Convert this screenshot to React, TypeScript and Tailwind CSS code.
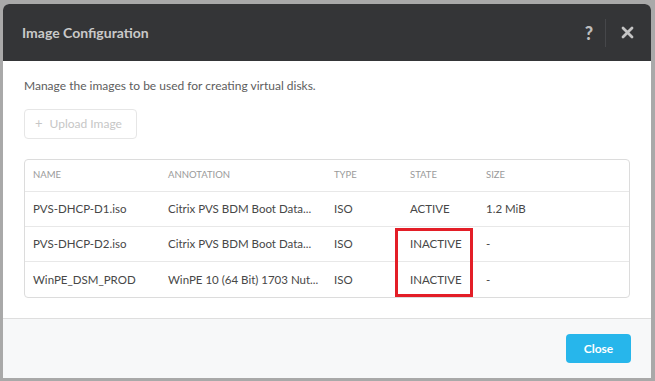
const rows = [
  { name: 'PVS-DHCP-D1.iso', annotation: 'Citrix PVS BDM Boot Data...', type: 'ISO', state: 'ACTIVE', size: '1.2 MiB' },
  { name: 'PVS-DHCP-D2.iso', annotation: 'Citrix PVS BDM Boot Data...', type: 'ISO', state: 'INACTIVE', size: '-' },
  { name: 'WinPE_DSM_PROD', annotation: 'WinPE 10 (64 Bit) 1703 Nut...', type: 'ISO', state: 'INACTIVE', size: '-' },
]

const cols = ['w-[135px]', 'w-[166px]', 'w-[76px]', 'w-[76px]', 'flex-1']

export default function App() {
  return (
    <div className="h-[381px] w-[655px] bg-[#a9a9a9] pt-[4px] pl-[3px] font-['Lato',sans-serif]">
      <div className="flex h-[374px] w-[648px] flex-col overflow-hidden rounded-t-[6px] bg-white">
        {/* header */}
        <div className="flex h-[57px] items-center bg-[#343537] pl-[19px] pr-[17px]">
          <h1 className="flex-1 text-[14px] font-bold text-[#c9c9c9]">Image Configuration</h1>
          <span className="text-[18px] font-black leading-none text-[#bdbdbd]">?</span>
          <div className="mr-[13px] ml-[12px] h-[28px] w-px bg-[#46474a]" />
          <svg width="13" height="13" viewBox="0 0 13 13" className="ml-[2px]">
            <path d="M2 2 L11 11 M11 2 L2 11" stroke="#c4c4c4" strokeWidth="2.8" strokeLinecap="round" />
          </svg>
        </div>

        {/* body */}
        <div className="flex-1 px-[21px] pt-[16px]">
          <p className="text-[12px] text-[#5d5d5d]">Manage the images to be used for creating virtual disks.</p>
          <button
            disabled
            className="mt-[14px] flex h-[30px] items-center gap-[7px] rounded-[4px] border border-[#e6e6e6] pl-[10px] pr-[14px] text-[12px] text-[#c6c6c6]"
          >
            <span className="text-[13px]">+</span>
            Upload Image
          </button>

          <div className="relative mt-[20px] rounded-[4px] border border-[#dcdcdc]">
            <div className="flex h-[32px] items-center border-b border-[#e8e8e8] pl-[8px] text-[9.5px] text-[#9a9a9a]">
              {['NAME', 'ANNOTATION', 'TYPE', 'STATE', 'SIZE'].map((h, i) => (
                <div key={h} className={cols[i]}>{h}</div>
              ))}
            </div>
            {rows.map((r, idx) => (
              <div
                key={r.name}
                className={`flex h-[35px] items-center pl-[8px] text-[11.5px] text-[#474747] ${idx < 2 ? 'border-b border-[#e8e8e8]' : ''}`}
              >
                <div className={cols[0]}>{r.name}</div>
                <div className={cols[1]}>{r.annotation}</div>
                <div className={cols[2]}>{r.type}</div>
                <div className={cols[3]}>{r.state}</div>
                <div className={cols[4]}>{r.size}</div>
              </div>
            ))}
            {/* highlight box */}
            <div className="absolute left-[370px] top-[68px] h-[69px] w-[78px] border-[3px] border-[#e31e27]" />
          </div>
        </div>

        {/* footer */}
        <div className="flex h-[60px] items-center justify-end border-t border-[#dedede] bg-[#f7f8f9] pr-[20px]">
          <button className="h-[29px] w-[65px] rounded-[4px] bg-[#27b6eb] text-[12px] font-bold text-white">Close</button>
        </div>
      </div>
    </div>
  )
}
